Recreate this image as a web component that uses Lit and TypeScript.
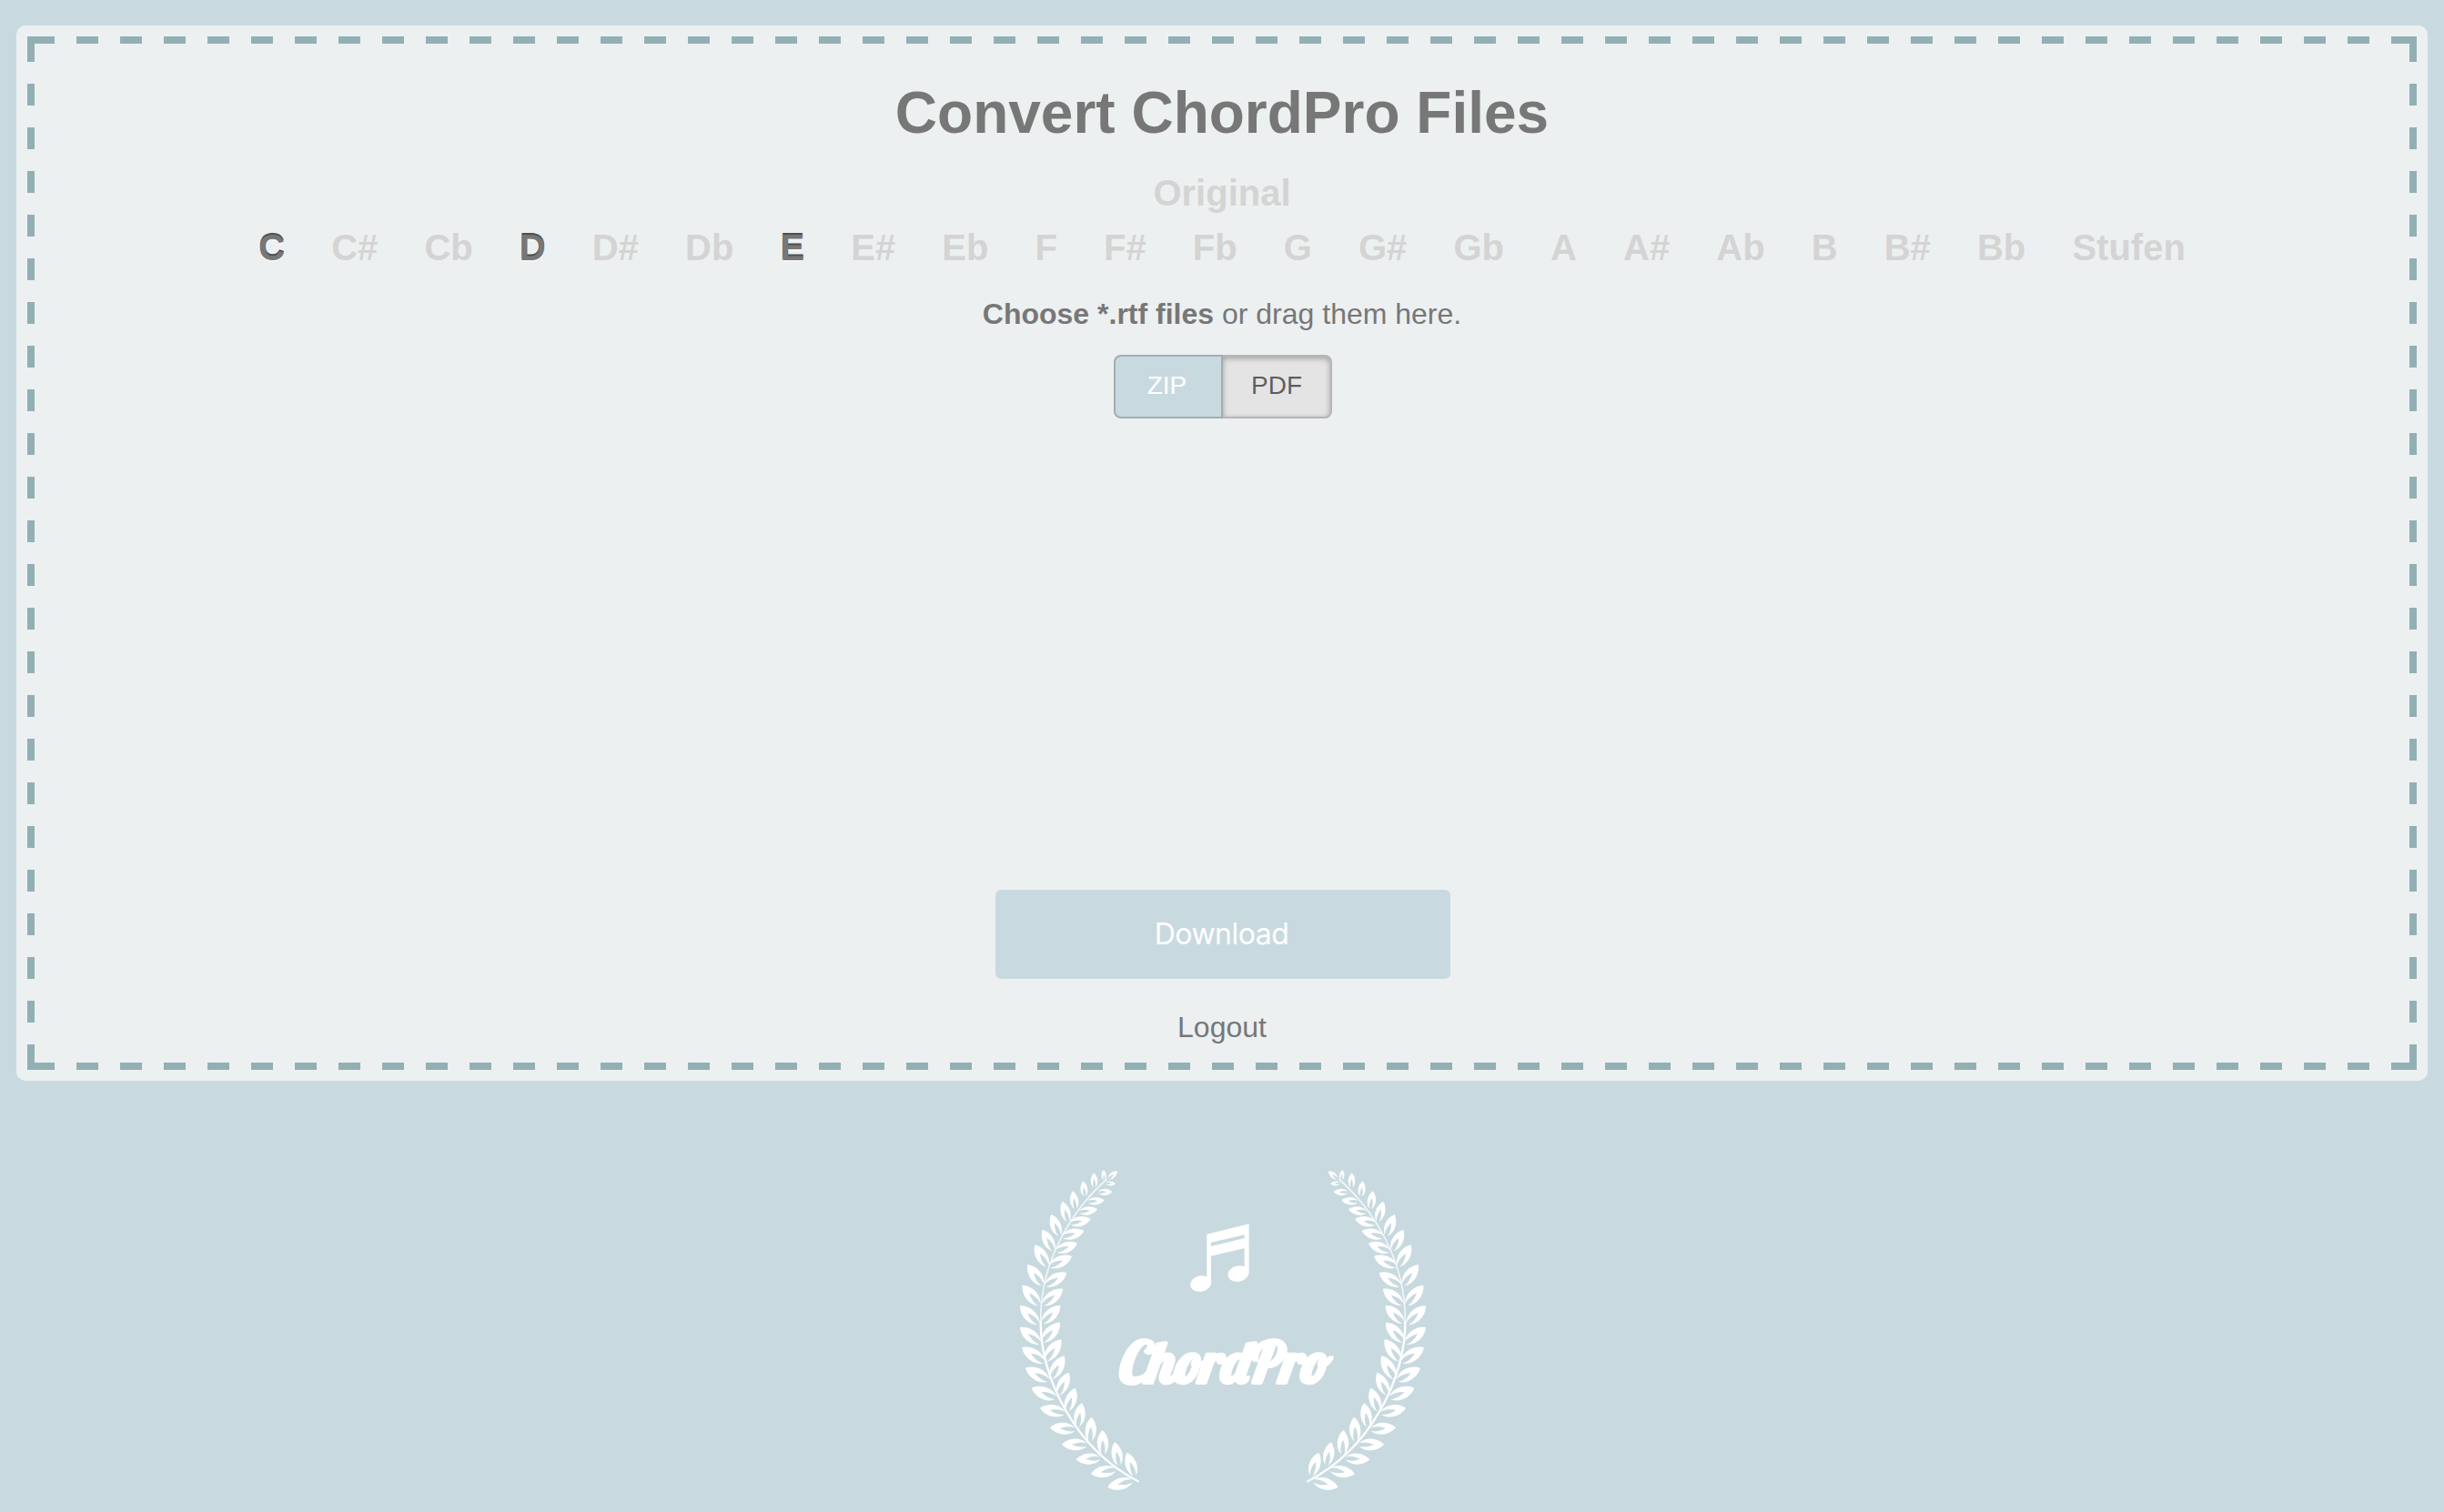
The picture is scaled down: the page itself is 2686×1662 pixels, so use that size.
import { LitElement, html, svg, css } from "lit";
import { customElement, state } from "lit/decorators.js";

type Leaf = [number, number, number, number];

// Each leaf: tip x, tip y, base x, base y.
const LEAVES: Leaf[] = [
  [384, 82, 354, 108], [338, 78, 341, 112], [307, 88, 308, 136], [271, 115, 277, 166],
  [237, 148, 246, 207], [203, 182, 222, 248], [166, 225, 194, 295], [137, 275, 174, 344],
  [112, 325, 154, 395], [88, 390, 138, 458], [71, 458, 127, 523], [63, 526, 124, 585],
  [63, 597, 130, 650], [69, 663, 143, 712], [81, 731, 158, 772], [101, 797, 182, 830],
  [129, 863, 211, 880], [162, 927, 245, 934], [201, 983, 284, 984], [248, 1033, 328, 1029],
  [297, 1081, 378, 1066], [352, 1124, 434, 1103],
  [378, 124, 346, 122], [367, 150, 320, 152], [341, 178, 286, 183], [318, 208, 258, 217],
  [296, 240, 228, 255], [274, 279, 202, 299], [252, 320, 182, 346], [234, 363, 160, 396],
  [217, 417, 147, 459], [204, 470, 139, 522], [196, 525, 137, 582], [195, 581, 137, 644],
  [199, 637, 147, 707], [209, 691, 165, 766], [224, 746, 189, 819], [245, 797, 218, 873],
  [267, 847, 253, 925], [299, 893, 294, 973], [335, 936, 337, 1017], [375, 976, 390, 1052],
  [416, 1010, 441, 1086],
];

const leafPath = ([tx, ty, bx, by]: Leaf): string => {
  const dx = tx - bx;
  const dy = ty - by;
  const p = (u: number, v: number) =>
    `${(bx + u * dx - v * dy).toFixed(1)} ${(by + u * dy + v * dx).toFixed(1)}`;
  return (
    `M${p(1, 0)}C${p(0.78, -0.24)} ${p(0.32, -0.34)} ${p(0, -0.06)}` +
    `C${p(0.2, -0.12)} ${p(0.4, -0.09)} ${p(0.6, 0)}` +
    `C${p(0.4, 0.09)} ${p(0.2, 0.12)} ${p(0, 0.06)}` +
    `C${p(0.32, 0.34)} ${p(0.78, 0.24)} ${p(1, 0)}Z`
  );
};
const BRANCH = LEAVES.map(leafPath).join("");

@customElement("chord-logo")
class ChordLogo extends LitElement {
  static styles = css`
    :host { display: block; }
    .logo { display: block; width: 446px; height: 360px; overflow: visible; }
    .name {
      font-family: Lobster, "Liberation Serif", serif;
      font-weight: 700;
      font-style: italic;
      font-size: 188px;
      stroke: #fff;
      stroke-width: 6px;
      stroke-linejoin: round;
    }
  `;

  private branch() {
    return svg`
      <path d=${BRANCH}></path>
      <path d="M350 108C240 205 130 370 131 575" fill="none" stroke="#fff" stroke-opacity=".75" stroke-width="5"></path>
      <path d="M131 575C128 760 245 1000 455 1106" fill="none" stroke="#fff" stroke-width="7"></path>`;
  }

  render() {
    return html`
      <svg class="logo" viewBox="60 60 1338 1080" fill="#fff">
        <g>${this.branch()}</g>
        <g transform="translate(1464 0) scale(-1 1)">${this.branch()}</g>
        <path fill-rule="evenodd" d="M679 290L818 256V418H803V336L693 362V450H679ZM693 317V330L803 303V292Z"></path>
        <ellipse cx="659" cy="453" rx="35" ry="26" transform="rotate(-12 659 453)"></ellipse>
        <ellipse cx="783" cy="420" rx="35" ry="26" transform="rotate(-12 783 420)"></ellipse>
        <text class="name" transform="translate(386 780) skewX(6)" textLength="694" lengthAdjust="spacingAndGlyphs">ChordPro</text>
      </svg>`;
  }
}

const KEYS = ["C", "C#", "Cb", "D", "D#", "Db", "E", "E#", "Eb", "F", "F#", "Fb", "G", "G#", "Gb", "A", "A#", "Ab", "B", "B#", "Bb", "Stufen"];

@customElement("app-root")
class AppRoot extends LitElement {
  @state() private selected = new Set(["C", "D", "E"]);
  @state() private format = "PDF";

  static styles = css`
    :host {
      display: flex;
      flex-direction: column;
      align-items: center;
      box-sizing: border-box;
      height: 1662px;
      padding: 28px 18px 0;
      overflow: hidden;
      background: #c8dadf;
      color: #777;
      font-family: "Liberation Sans", Arial, sans-serif;
      font-size: 32px;
    }
    .card {
      align-self: stretch;
      box-sizing: border-box;
      height: 1160px;
      padding: 12px;
      border-radius: 10px;
      background: #ecf0f1;
    }
    .zone {
      --c: #92b0b3;
      --h: repeating-linear-gradient(90deg, transparent 0 6px, var(--c) 6px 30px, transparent 30px 48px);
      --v: repeating-linear-gradient(180deg, transparent 0 4px, var(--c) 4px 28px, transparent 28px 48px);
      --b: linear-gradient(var(--c), var(--c));
      display: flex;
      flex-direction: column;
      align-items: center;
      box-sizing: border-box;
      height: 100%;
      padding-top: 44px;
      background:
        var(--b) 0 0 / 8px 8px, var(--b) 100% 0 / 28px 8px,
        var(--b) 0 100% / 8px 8px, var(--b) 100% 100% / 28px 8px,
        var(--b) 100% 0 / 8px 28px, var(--b) 0 100% / 8px 28px, var(--b) 100% 100% / 8px 28px,
        var(--h) 0 0 / 100% 8px, var(--h) 0 100% / 100% 8px,
        var(--v) 0 0 / 8px 100%, var(--v) 100% 0 / 8px 100%;
      background-repeat: no-repeat;
    }
    .title { margin: 0; font-size: 64px; line-height: 80px; font-weight: 700; }
    .keys {
      display: flex;
      flex-direction: column;
      align-items: center;
      margin-top: 18px;
      font-size: 40px;
      line-height: 60px;
      font-weight: 700;
      color: #d4d4d4;
    }
    .row { display: flex; gap: 51.1px; }
    .on { color: #777; text-shadow: 0 -2px 0 #4a5050, 0 2px 0 #f4f5f5; }
    .hint { margin-top: 21px; line-height: 44px; }
    .switch { display: flex; margin: 23px 0 0 2px; font-size: 28px; }
    .opt {
      box-sizing: border-box;
      width: 120px;
      height: 70px;
      border: 2px solid rgba(0, 0, 0, 0.2);
      background: #c8dadf;
      color: #fff;
      line-height: 64px;
      text-align: center;
    }
    .opt:first-child { padding-right: 3px; border-radius: 8px 0 0 8px; }
    .opt:last-child { border-left-width: 0; border-radius: 0 8px 8px 0; }
    .opt.active {
      background: #e4e4e4;
      color: rgba(0, 0, 0, 0.6);
      box-shadow: inset 0 2px 6px rgba(0, 0, 0, 0.3);
    }
    .download {
      box-sizing: border-box;
      width: 500px;
      height: 98px;
      margin: 518px 0 0 2px;
      padding-right: 3px;
      border-radius: 6px;
      background: #c8dadf;
      color: #fff;
      font-family: Inter, sans-serif;
      letter-spacing: -0.5px;
      line-height: 97px;
      text-align: center;
    }
    .logout { margin-top: 31px; line-height: 44px; }
    .brand { margin-top: 92px; }
  `;

  private toggle(key: string) {
    const next = new Set(this.selected);
    next.has(key) ? next.delete(key) : next.add(key);
    this.selected = next;
  }

  render() {
    return html`
      <div class="card">
        <div class="zone">
          <h1 class="title">Convert ChordPro Files</h1>
          <div class="keys">
            <div>Original</div>
            <div class="row">
              ${KEYS.map((k) => html`<span class=${this.selected.has(k) ? "on" : ""} @click=${() => this.toggle(k)}>${k}</span>`)}
            </div>
          </div>
          <div class="hint"><b>Choose *.rtf files</b> or drag them here.</div>
          <div class="switch">
            ${["ZIP", "PDF"].map((f) => html`<div class="opt ${this.format === f ? "active" : ""}" @click=${() => (this.format = f)}>${f}</div>`)}
          </div>
          <div class="download">Download</div>
          <div class="logout">Logout</div>
        </div>
      </div>
      <chord-logo class="brand"></chord-logo>`;
  }
}
